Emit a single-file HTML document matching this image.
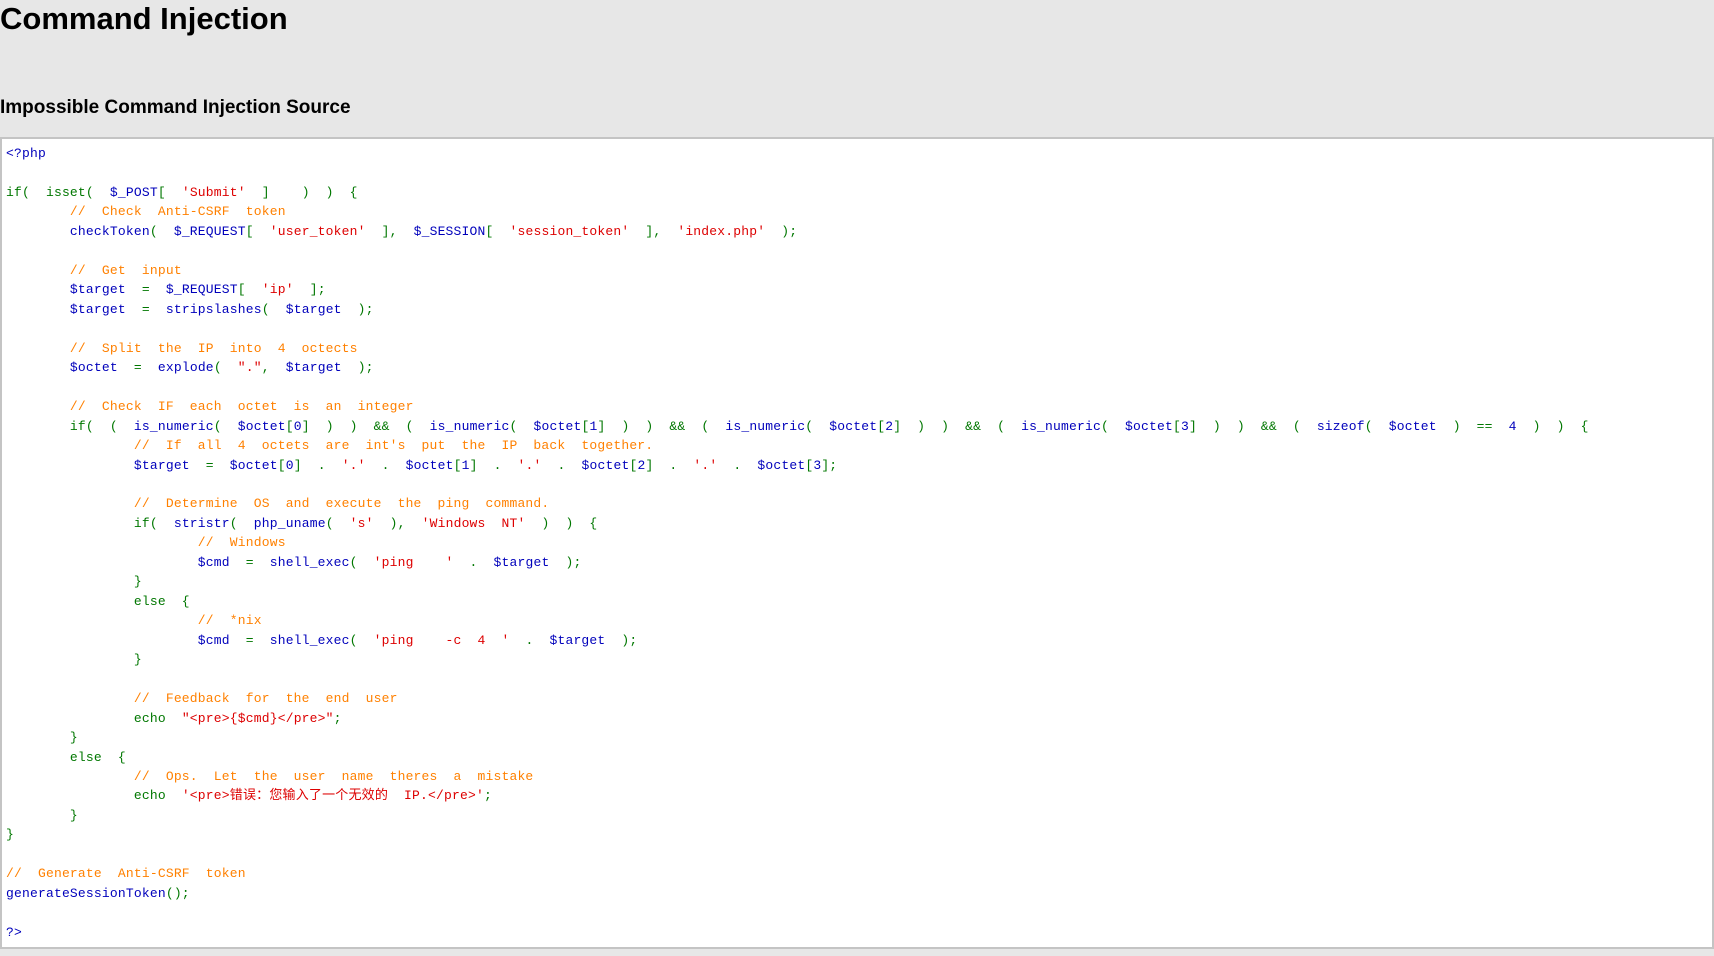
<!DOCTYPE html>
<html><head><meta charset="utf-8"><style>
body{margin:0;background:#e7e7e7;width:1714px;height:956px;overflow:hidden;font-family:"Liberation Sans",Arial,sans-serif;}
h1{position:absolute;left:0;top:1px;margin:0;font-size:31px;line-height:36px;font-weight:bold;color:#000;}
h2{position:absolute;left:0;top:96px;margin:0;font-size:19px;line-height:24px;font-weight:bold;color:#000;}
.box{position:absolute;left:0;top:137px;width:1710px;height:808px;background:#fff;border:2px solid #c4c4c4;}
pre{position:absolute;left:4px;top:5px;margin:0;font-family:"Liberation Mono","Noto Sans CJK SC",monospace;font-size:13px;letter-spacing:0.19px;line-height:19.47px;color:#0000BB;}
.g{color:#007700}.o{color:#FF8000}.r{color:#DD0000}.b{color:#0000BB}
</style></head><body>
<h1>Command Injection</h1>
<h2>Impossible Command Injection Source</h2>
<div class="box"><pre>&lt;?php

<span class="g">if(  isset(  </span>$_POST<span class="g">[  </span><span class="r">'Submit'</span><span class="g">  ]    )  )  {</span>
<span class="o">        //  Check  Anti-CSRF  token</span>
        checkToken<span class="g">(  </span>$_REQUEST<span class="g">[  </span><span class="r">'user_token'</span><span class="g">  ],  </span>$_SESSION<span class="g">[  </span><span class="r">'session_token'</span><span class="g">  ],  </span><span class="r">'index.php'</span><span class="g">  );</span>

<span class="o">        //  Get  input</span>
        $target  <span class="g">=  </span>$_REQUEST<span class="g">[  </span><span class="r">'ip'</span><span class="g">  ];</span>
        $target  <span class="g">=  </span>stripslashes<span class="g">(  </span>$target  <span class="g">);</span>

<span class="o">        //  Split  the  IP  into  4  octects</span>
        $octet  <span class="g">=  </span>explode<span class="g">(  </span><span class="r">"."</span><span class="g">,  </span>$target  <span class="g">);</span>

<span class="o">        //  Check  IF  each  octet  is  an  integer</span>
<span class="g">        if(  (  </span>is_numeric<span class="g">(  </span>$octet<span class="g">[</span>0<span class="g">]  )  )  &amp;&amp;  (  </span>is_numeric<span class="g">(  </span>$octet<span class="g">[</span>1<span class="g">]  )  )  &amp;&amp;  (  </span>is_numeric<span class="g">(  </span>$octet<span class="g">[</span>2<span class="g">]  )  )  &amp;&amp;  (  </span>is_numeric<span class="g">(  </span>$octet<span class="g">[</span>3<span class="g">]  )  )  &amp;&amp;  (  </span>sizeof<span class="g">(  </span>$octet  <span class="g">)  ==  </span>4  <span class="g">)  )  {</span>
<span class="o">                //  If  all  4  octets  are  int's  put  the  IP  back  together.</span>
                $target  <span class="g">=  </span>$octet<span class="g">[</span>0<span class="g">]  .  </span><span class="r">'.'</span>  <span class="g">.  </span>$octet<span class="g">[</span>1<span class="g">]  .  </span><span class="r">'.'</span>  <span class="g">.  </span>$octet<span class="g">[</span>2<span class="g">]  .  </span><span class="r">'.'</span>  <span class="g">.  </span>$octet<span class="g">[</span>3<span class="g">];</span>

<span class="o">                //  Determine  OS  and  execute  the  ping  command.</span>
<span class="g">                if(  </span>stristr<span class="g">(  </span>php_uname<span class="g">(  </span><span class="r">'s'</span>  <span class="g">),  </span><span class="r">'Windows  NT'</span>  <span class="g">)  )  {</span>
<span class="o">                        //  Windows</span>
                        $cmd  <span class="g">=  </span>shell_exec<span class="g">(  </span><span class="r">'ping    '</span>  <span class="g">.  </span>$target  <span class="g">);</span>
<span class="g">                }</span>
<span class="g">                else  {</span>
<span class="o">                        //  *nix</span>
                        $cmd  <span class="g">=  </span>shell_exec<span class="g">(  </span><span class="r">'ping    -c  4  '</span>  <span class="g">.  </span>$target  <span class="g">);</span>
<span class="g">                }</span>

<span class="o">                //  Feedback  for  the  end  user</span>
<span class="g">                echo  </span><span class="r">"&lt;pre&gt;{$cmd}&lt;/pre&gt;"</span><span class="g">;</span>
<span class="g">        }</span>
<span class="g">        else  {</span>
<span class="o">                //  Ops.  Let  the  user  name  theres  a  mistake</span>
<span class="g">                echo  </span><span class="r">'&lt;pre&gt;错误：您输入了一个无效的  IP.&lt;/pre&gt;'</span><span class="g">;</span>
<span class="g">        }</span>
<span class="g">}</span>

<span class="o">//  Generate  Anti-CSRF  token</span>
generateSessionToken<span class="g">();</span>

?&gt;</pre></div>
</body></html>
